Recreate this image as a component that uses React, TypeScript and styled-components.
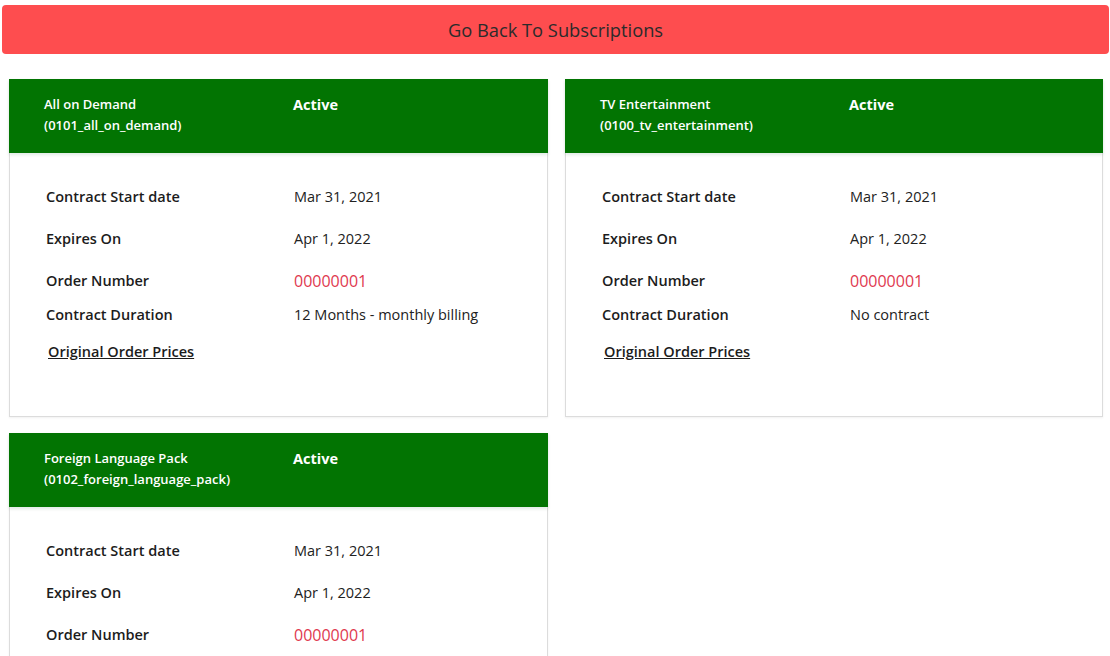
import styled, { createGlobalStyle } from "styled-components";

const GlobalStyle = createGlobalStyle`
  body {
    margin: 0;
    background: #ffffff;
    font-family: "Open Sans", "Liberation Sans", sans-serif;
    color: #1f1f1f;
  }
`;

const Page = styled.div`
  padding: 5px 1px 0 2px;
`;

const BackButton = styled.button`
  display: block;
  width: 100%;
  height: 49px;
  border: none;
  border-radius: 4px;
  background: #fe4d4f;
  color: #2b2b2b;
  font-family: "Open Sans", "Liberation Sans", sans-serif;
  font-size: 18.3px;
  cursor: pointer;
`;

const Grid = styled.div`
  display: grid;
  grid-template-columns: 539px 538px;
  column-gap: 17px;
  row-gap: 16px;
  padding: 25px 0 0 7px;
`;

const Card = styled.section`
  border: 1px solid #dcdcdc;
  border-top: none;
  background: #fff;
  box-shadow: 0 1px 2px rgba(0, 0, 0, 0.06);
  min-height: 337px;
`;

const Header = styled.header`
  display: grid;
  grid-template-columns: 249px 1fr;
  align-items: start;
  height: 74px;
  box-sizing: border-box;
  padding: 15px 0 0 35px;
  margin: 0 -1px;
  background: #027402;
  color: #fff;
  box-shadow: 0 2px 3px rgba(0, 90, 40, 0.12);
`;

const Title = styled.div`
  font-size: 13px;
  font-weight: 600;
  line-height: 21px;
`;

const Status = styled.div`
  font-size: 14.5px;
  font-weight: 700;
  line-height: 21px;
`;

const Body = styled.div`
  padding: 33px 0 53px 36px;
`;

const Row = styled.div<{ $gap: number }>`
  display: grid;
  grid-template-columns: 248px 1fr;
  align-items: center;
  line-height: 22px;
  margin-top: ${(p) => p.$gap}px;
`;

const Label = styled.span`
  font-size: 14.5px;
  font-weight: 600;
  color: #1c1c1c;
`;

const Value = styled.span<{ $accent?: boolean }>`
  font-size: ${(p) => (p.$accent ? "16px" : "14.5px")};
  color: ${(p) => (p.$accent ? "#e0394f" : "#222")};
`;

const PriceLink = styled.a`
  display: inline-block;
  margin: 15px 0 0 2px;
  font-size: 14.5px;
  font-weight: 600;
  line-height: 22px;
  color: #1c1c1c;
  text-decoration: underline;
  cursor: pointer;
`;

type Sub = {
  name: string;
  code: string;
  duration: string;
};

const subs: Sub[] = [
  { name: "All on Demand", code: "0101_all_on_demand", duration: "12 Months - monthly billing" },
  { name: "TV Entertainment", code: "0100_tv_entertainment", duration: "No contract" },
  { name: "Foreign Language Pack", code: "0102_foreign_language_pack", duration: "12 Months - monthly billing" },
];

function SubscriptionCard({ sub }: { sub: Sub }) {
  return (
    <Card>
      <Header>
        <Title>
          {sub.name}
          <br />({sub.code})
        </Title>
        <Status>Active</Status>
      </Header>
      <Body>
        <Row $gap={0}>
          <Label>Contract Start date</Label>
          <Value>Mar 31, 2021</Value>
        </Row>
        <Row $gap={20}>
          <Label>Expires On</Label>
          <Value>Apr 1, 2022</Value>
        </Row>
        <Row $gap={20}>
          <Label>Order Number</Label>
          <Value $accent>00000001</Value>
        </Row>
        <Row $gap={12}>
          <Label>Contract Duration</Label>
          <Value>{sub.duration}</Value>
        </Row>
        <PriceLink>Original Order Prices</PriceLink>
      </Body>
    </Card>
  );
}

export default function App() {
  return (
    <Page>
      <GlobalStyle />
      <BackButton>Go Back To Subscriptions</BackButton>
      <Grid>
        {subs.map((s) => (
          <SubscriptionCard key={s.code} sub={s} />
        ))}
      </Grid>
    </Page>
  );
}
